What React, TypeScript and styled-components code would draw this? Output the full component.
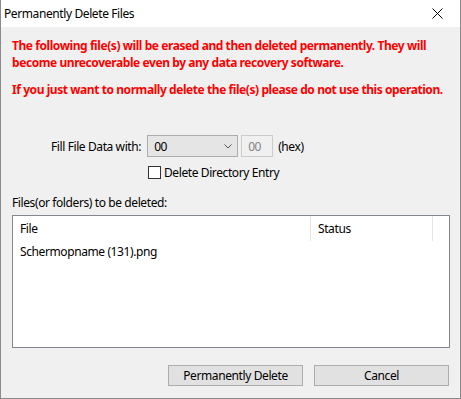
import React from "react";
import styled, { createGlobalStyle } from "styled-components";

const Global = createGlobalStyle`
  html, body { margin: 0; padding: 0; background: #f0f0f0; }
  body { font-family: "Noto Sans", "Open Sans", sans-serif; font-size: 12px; letter-spacing: -0.4px; color: #000; }
  * { box-sizing: border-box; }
`;

const Window = styled.div`
  width: 461px;
  height: 399px;
  display: flex;
  flex-direction: column;
  border: 1px solid #8a8a8a;
  border-top: none;
  background: #f0f0f0;
  overflow: hidden;
`;

const TitleBar = styled.div`
  height: 27px;
  flex: none;
  background: #fff;
  display: flex;
  align-items: center;
  justify-content: space-between;
  padding: 0 0 1px 3px;
`;

const Title = styled.span`
  font-size: 12px;
  color: #000;
`;

const CloseButton = styled.div`
  width: 30px;
  height: 26px;
  display: flex;
  align-items: center;
  justify-content: center;
  margin-right: 8px;
`;

const Body = styled.div`
  flex: 1;
  display: flex;
  flex-direction: column;
  padding: 10px 10px 12px 11px;
`;

const Warning = styled.p<{ $gap?: number }>`
  margin: 0 0 ${(p) => p.$gap ?? 0}px 0;
  color: #f00;
  font-weight: bold;
  font-size: 12px;
  line-height: 17px;
  letter-spacing: -0.43px;
  white-space: nowrap;
`;

const FillRow = styled.div`
  display: flex;
  align-items: center;
  margin-top: 37px;
  padding-left: 39px;
  height: 22px;
`;

const Label = styled.span`
  margin-right: 6px;
`;

const Combo = styled.div`
  width: 91px;
  height: 22px;
  background: #e5e5e5;
  border: 1px solid #adadad;
  display: flex;
  align-items: center;
  justify-content: space-between;
  padding: 0 5px 0 6px;
`;

const TextBox = styled.div`
  width: 32px;
  height: 22px;
  margin-left: 3px;
  border: 1px solid #cccccc;
  background: #f0f0f0;
  color: #838383;
  display: flex;
  align-items: center;
  padding-left: 6px;
`;

const Hex = styled.span`
  margin-left: 5px;
`;

const CheckRow = styled.label`
  display: flex;
  align-items: center;
  margin: 9px 0 0 136px;
  height: 13px;
`;

const CheckBox = styled.span`
  width: 13px;
  height: 13px;
  border: 1px solid #333;
  background: #fff;
  margin-right: 3px;
`;

const ListLabel = styled.div`
  margin-top: 16px;
  line-height: 15px;
`;

const ListView = styled.div`
  margin-top: 5px;
  height: 133px;
  border: 1px solid #828790;
  background: #fff;
  display: flex;
  flex-direction: column;
`;

const HeaderRow = styled.div`
  display: grid;
  grid-template-columns: 298px 122px 1fr;
  height: 25px;
`;

const HeaderCell = styled.div<{ $last?: boolean }>`
  display: flex;
  align-items: center;
  padding-left: 7px;
  border-right: ${(p) => (p.$last ? "none" : "1px solid #e5e5e5")};
`;

const Row = styled.div`
  display: grid;
  grid-template-columns: 298px 122px 1fr;
  height: 21px;
  align-items: center;
`;

const Cell = styled.div`
  padding-left: 7px;
`;

const ButtonRow = styled.div`
  margin-top: auto;
  display: flex;
  justify-content: flex-end;
  gap: 11px;
  padding-right: 1px;
`;

const Button = styled.button`
  width: 135px;
  height: 21px;
  background: #e1e1e1;
  border: 1px solid #adadad;
  font-family: inherit;
  font-size: 12px;
  letter-spacing: inherit;
  color: #000;
  padding: 0;
`;

export default function App() {
  return (
    <>
      <Global />
      <Window>
        <TitleBar>
          <Title>Permanently Delete Files</Title>
          <CloseButton>
            <svg width="11" height="11" viewBox="0 0 11 11">
              <path d="M0.5 0.5 L10.5 10.5 M10.5 0.5 L0.5 10.5" stroke="#000" strokeWidth="1" />
            </svg>
          </CloseButton>
        </TitleBar>
        <Body>
          <Warning $gap={10}>
            The following file(s) will be erased and then deleted permanently. They will
            <br />
            become unrecoverable even by any data recovery software.
          </Warning>
          <Warning>If you just want to normally delete the file(s) please do not use this operation.</Warning>
          <FillRow>
            <Label>Fill File Data with:</Label>
            <Combo>
              <span>00</span>
              <svg width="8" height="5" viewBox="0 0 8 5">
                <path d="M0.5 0.5 L4 4 L7.5 0.5" stroke="#555" fill="none" />
              </svg>
            </Combo>
            <TextBox>00</TextBox>
            <Hex>(hex)</Hex>
          </FillRow>
          <CheckRow>
            <CheckBox />
            Delete Directory Entry
          </CheckRow>
          <ListLabel>Files(or folders) to be deleted:</ListLabel>
          <ListView>
            <HeaderRow>
              <HeaderCell>File</HeaderCell>
              <HeaderCell>Status</HeaderCell>
              <HeaderCell $last />
            </HeaderRow>
            <Row>
              <Cell>Schermopname (131).png</Cell>
              <Cell />
            </Row>
          </ListView>
          <ButtonRow>
            <Button>Permanently Delete</Button>
            <Button>Cancel</Button>
          </ButtonRow>
        </Body>
      </Window>
    </>
  );
}
